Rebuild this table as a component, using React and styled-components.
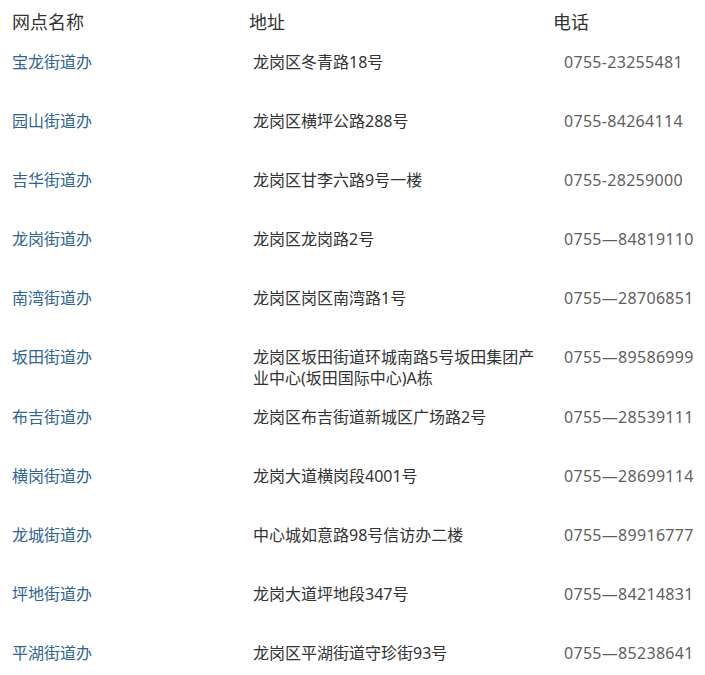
import React from "react";
import styled, { createGlobalStyle } from "styled-components";

const Global = createGlobalStyle`
  html, body { margin: 0; padding: 0; background: #fff; }
  body { font-family: "Noto Sans", "Noto Sans CJK SC", sans-serif; }
`;

const Page = styled.div`
  width: 705px;
  height: 675px;
  overflow: hidden;
  padding: 10px 0 0 12px;
  box-sizing: border-box;
`;

const Grid = styled.div`
  display: grid;
  grid-template-columns: 241px 311px 1fr;
`;

const HeadCell = styled.div`
  font-size: 18px;
  line-height: 24px;
  color: #333;
  margin-left: ${(p) => p.$shift || 0}px;
  height: 41.5px;
`;

const Cell = styled.div`
  font-size: 16px;
  line-height: 21px;
  height: 59.2px;
  color: ${(p) => p.$color};
  letter-spacing: ${(p) => p.$spacing || 0}px;
  max-width: ${(p) => (p.$wrap ? "296px" : "none")};
  white-space: ${(p) => (p.$wrap ? "normal" : "nowrap")};
`;

const rows = [
  ["宝龙街道办", "龙岗区冬青路18号", "0755-23255481"],
  ["园山街道办", "龙岗区横坪公路288号", "0755-84264114"],
  ["吉华街道办", "龙岗区甘李六路9号一楼", "0755-28259000"],
  ["龙岗街道办", "龙岗区龙岗路2号", "0755—84819110"],
  ["南湾街道办", "龙岗区岗区南湾路1号", "0755—28706851"],
  ["坂田街道办", "龙岗区坂田街道环城南路5号坂田集团产业中心(坂田国际中心)A栋", "0755—89586999"],
  ["布吉街道办", "龙岗区布吉街道新城区广场路2号", "0755—28539111"],
  ["横岗街道办", "龙岗大道横岗段4001号", "0755—28699114"],
  ["龙城街道办", "中心城如意路98号信访办二楼", "0755—89916777"],
  ["坪地街道办", "龙岗大道坪地段347号", "0755—84214831"],
  ["平湖街道办", "龙岗区平湖街道守珍街93号", "0755—85238641"],
];

export default function App() {
  return (
    <Page>
      <Global />
      <Grid>
        <HeadCell>网点名称</HeadCell>
        <HeadCell $shift={-4}>地址</HeadCell>
        <HeadCell $shift={-11}>电话</HeadCell>
        {rows.map(([n, a, t]) => (
          <React.Fragment key={n}>
            <Cell $color="#2f6596">{n}</Cell>
            <Cell $color="#333" $wrap>{a}</Cell>
            <Cell $color="#5f5f5f" $spacing={0.3}>{t}</Cell>
          </React.Fragment>
        ))}
      </Grid>
    </Page>
  );
}
